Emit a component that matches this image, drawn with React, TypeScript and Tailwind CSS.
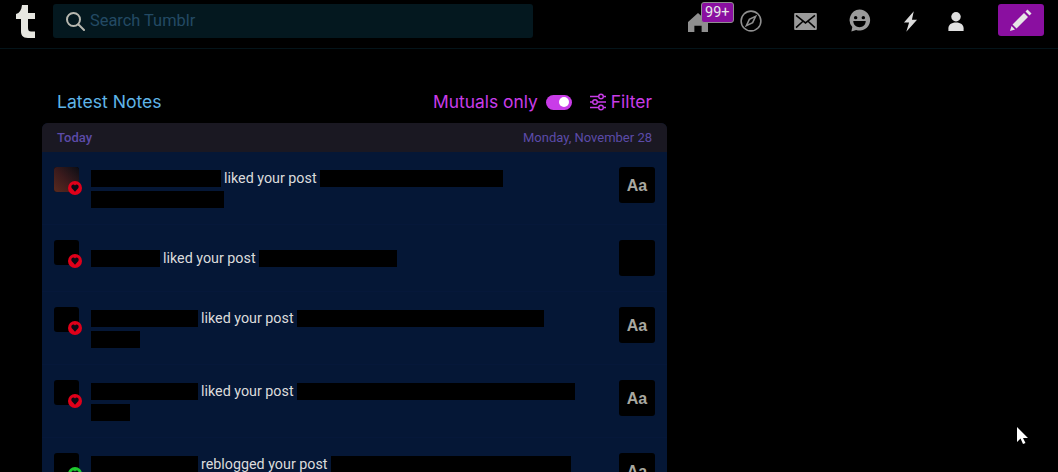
import type { ReactNode } from "react";

type Bar = { w: number };
type Note = {
  name: number;
  action: string;
  post: number;
  second?: number;
  aa?: boolean;
  fade?: boolean;
  kind?: "like" | "reblog";
};

const notes: Note[] = [
  { name: 130, action: "liked your post", post: 183, second: 133, aa: true, fade: true },
  { name: 69, action: "liked your post", post: 138 },
  { name: 107, action: "liked your post", post: 247, second: 49, aa: true },
  { name: 107, action: "liked your post", post: 278, second: 39, aa: true },
  { name: 107, action: "reblogged your post", post: 240, second: 39, aa: true, kind: "reblog" },
];

function Redacted({ w }: Bar) {
  return <span className="block h-[17px] shrink-0 bg-black" style={{ width: w }} />;
}

function NavIcon({ children, className }: { children: ReactNode; className: string }) {
  return <div className={`flex shrink-0 items-center justify-center ${className}`}>{children}</div>;
}

function NoteRow({ note }: { note: Note }) {
  const badge = note.kind === "reblog" ? "bg-[#1fc92f]" : "bg-[#e0001a]";
  return (
    <div className={`flex items-start border-b border-[#06183a] pl-3 pr-3 pt-[15px] ${note.second ? "h-[73px]" : "h-[67px]"}`}>
      <div className="relative h-[25px] w-[25px] shrink-0 rounded-[3px] bg-black">
        {note.fade && <div className="h-full w-full rounded-[3px] bg-gradient-to-tr from-[#5a2a1e] via-[#3a1a1c] to-[#0b0d14]" />}
        <div className={`absolute left-[14px] top-[14px] flex h-[14px] w-[14px] items-center justify-center rounded-full ${badge}`}>
          <svg viewBox="0 0 24 24" className="h-[8px] w-[8px] fill-[#0a0a14]">
            <path d="M12 23 2.500 12.500C-1 7.500 2 1.500 6.800 1.500c2.300 0 4 1.100 5.200 3 1.200-1.900 2.900-3 5.200-3 4.800 0 7.800 6 4.300 11z" />
          </svg>
        </div>
      </div>
      <div className={`ml-3 flex min-w-0 flex-1 flex-col gap-[4px] ${note.second ? "pt-[3px]" : "pt-[10px]"}`}>
        <div className="flex items-center gap-[3px] text-[14.300px] leading-[17px] text-[#dcdcdc]">
          <Redacted w={note.name} />
          <span className="whitespace-nowrap">{note.action}</span>
          <Redacted w={note.post} />
        </div>
        {note.second && <Redacted w={note.second} />}
      </div>
      <div className="flex h-9 w-9 shrink-0 items-center justify-center rounded-[3px] bg-black pt-[1px] font-['Liberation_Sans',sans-serif] text-[16px] font-bold text-[#a8a8a0]">
        {note.aa ? "Aa" : ""}
      </div>
    </div>
  );
}

export default function App() {
  return (
    <div className="h-[472px] w-[1058px] overflow-hidden bg-black font-['Roboto',sans-serif]">
      <header className="flex h-[49px] items-start border-b border-[#04141a] pt-1">
        <div className="flex h-[34px] w-[53px] shrink-0 items-center justify-center">
          <svg viewBox="0 0 20 34" className="ml-[-2px] h-[34px] w-5 fill-[#e6e6e0]">
            <path d="M6 1h6v8h7v6h-7v9c0 2.500 1 3.500 3 3.500h4V34h-7C6.500 34 5 31 5 27V15H0V10C3.500 9 5.500 6 6 1Z" />
          </svg>
        </div>
        <div className="flex h-[34px] w-[480px] shrink-0 items-center rounded-[3px] bg-[#04181f] pl-3">
          <svg viewBox="0 0 20 20" className="h-[20px] w-[20px] shrink-0 fill-none stroke-[#b8b8b0] stroke-2">
            <circle cx="8.500" cy="8.500" r="6.500" />
            <path d="m13.500 13.500 5.500 5.500" strokeLinecap="round" />
          </svg>
          <span className="ml-[5px] text-[16.400px] text-[#234a64]">Search Tumblr</span>
        </div>

        <NavIcon className="relative ml-[153px] h-8 w-6">
          <svg viewBox="0 0 22 22" className="mt-1 h-[22px] w-[20px] fill-[#8f8f8f]">
            <path d="M11 1 0 11v11h7v-7h8v7h7V11z" />
          </svg>
          <span className="absolute left-[15px] top-[-2px] rounded-[3px] border border-[#8f8f8f] bg-[#8a0fa0] px-[3px] text-[14.500px] leading-[19px] text-[#e8e8e8]">
            99+
          </span>
        </NavIcon>
        <NavIcon className="ml-[29px] h-8 w-6">
          <svg viewBox="0 0 24 24" className="mt-[2px] h-[22px] w-[22px] fill-none stroke-[#8f8f8f] stroke-[1.700]">
            <circle cx="12" cy="12" r="10.800" />
            <path d="M17 7 13.800 13.800 7 17l3.200-6.800z" />
          </svg>
        </NavIcon>
        <NavIcon className="ml-[30px] h-8 w-6">
          <svg viewBox="0 0 24 18" className="mt-[3px] h-[17px] w-[23px]">
            <path className="fill-[#9a9a9a]" d="M1 0h22a1 1 0 0 1 1 1v16a1 1 0 0 1-1 1H1a1 1 0 0 1-1-1V1a1 1 0 0 1 1-1Z" />
            <path className="fill-none stroke-black stroke-[1.600]" d="m2 2.500 10 8 10-8M2 15.500l7-6.500M22 15.500l-7-6.500" />
          </svg>
        </NavIcon>
        <NavIcon className="ml-[30px] h-8 w-6">
          <svg viewBox="0 0 24 24" className="h-[23px] w-[23px]">
            <path className="fill-[#9a9a9a]" d="M12 .5a11 11 0 1 1-3.500 21.400L3.500 23.500l1-4.700A11 11 0 0 1 12 .5Z" />
            <circle className="fill-black" cx="8" cy="9" r="1.800" />
            <circle className="fill-black" cx="16" cy="9" r="1.800" />
            <path className="fill-black" d="M5.500 12.500h13c0 4-3 6.500-6.500 6.500s-6.500-2.500-6.500-6.500Z" />
          </svg>
        </NavIcon>
        <NavIcon className="ml-[27px] h-8 w-6">
          <svg viewBox="0 0 16 22" className="mt-[2px] h-[21px] w-[15px] fill-[#dcdcdc]">
            <path d="M11.500 0 1 12h5.500L3.500 22 15 9H9.500z" />
          </svg>
        </NavIcon>
        <NavIcon className="ml-[22px] h-8 w-6">
          <svg viewBox="0 0 16 20" className="mt-[2px] h-[19px] w-[16px] fill-[#e0e0e0]">
            <circle cx="8" cy="5" r="5" />
            <path d="M0 20v-3c0-3.500 3-6 8-6s8 2.500 8 6v3z" />
          </svg>
        </NavIcon>
        <button className="ml-[30px] flex h-[32px] w-[46px] shrink-0 items-center justify-center rounded-[3px] bg-[#8a0fa0]">
          <svg viewBox="0 0 24 24" className="h-[24px] w-[24px] fill-[#e6e6e6]">
            <path d="M18.500 1.500 22.500 5.500 20.500 7.500 16.500 3.500ZM15 5l4 4L7.500 20.500l-4-4ZM2.500 18l3.500 3.500-5 1.500Z" />
          </svg>
        </button>
      </header>

      <main className="ml-[42px] w-[625px]">
        <div className="flex h-[74px] items-end justify-between pb-[11px] pl-[15px] pr-[15px] font-['Inter',sans-serif] text-[17.400px] leading-5">
          <h1 className="text-[17.600px] text-[#5fb4e8]">Latest Notes</h1>
          <div className="flex items-center text-[#c93ce8]">
            <span>Mutuals only</span>
            <span className="ml-2 flex h-[15px] w-[26px] items-center justify-end rounded-full bg-[#c93ce8] pr-[3px]">
              <span className="h-[10px] w-[10px] rounded-full bg-white" />
            </span>
            <svg viewBox="0 0 16 18" className="ml-[18px] h-[18px] w-[16px] fill-none stroke-[#c93ce8] stroke-[1.400]">
              <path d="M0 3.500h8.500M13.500 3.500H16M0 9h2.500M7.500 9H16M0 14.500h8.500M13.500 14.500H16" />
              <circle cx="11" cy="3.500" r="2.300" />
              <circle cx="5" cy="9" r="2.300" />
              <circle cx="11" cy="14.500" r="2.300" />
            </svg>
            <span className="ml-[5px]">Filter</span>
          </div>
        </div>
        <section className="overflow-hidden rounded-t-[6px] bg-[#051736]">
          <div className="flex h-[29px] items-center justify-between bg-[#1a1822] px-[15px] text-[13px] text-[#5c4ba8]">
            <span className="font-medium">Today</span>
            <span>Monday, November 28</span>
          </div>
          {notes.map((note, i) => (
            <NoteRow key={i} note={note} />
          ))}
        </section>
      </main>

      {/* mouse pointer captured in the recording */}
      <svg viewBox="0 0 12 18" className="absolute left-[1017px] top-[427px] h-[18px] w-[12px] fill-white">
        <path d="M0 0v15l3.500-3.500L6 17l2.500-1-2.500-5h5z" />
      </svg>
    </div>
  );
}
